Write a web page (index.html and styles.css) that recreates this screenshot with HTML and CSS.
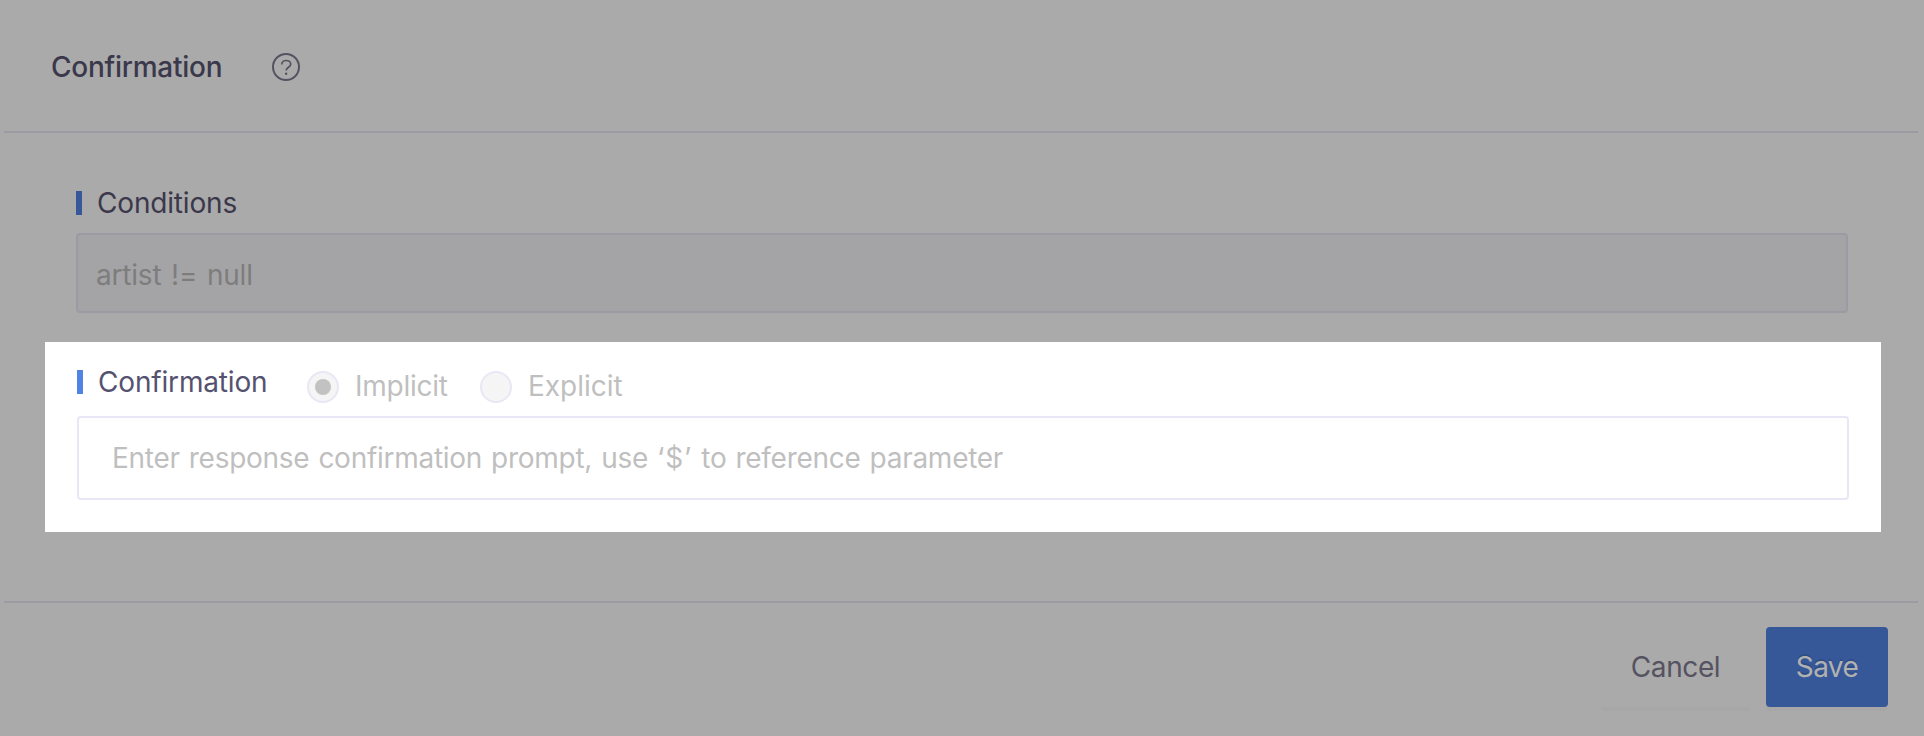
FILE: index.html
```html
<!DOCTYPE html>
<html lang="en">
<head>
<meta charset="utf-8">
<title>Confirmation</title>
<link rel="stylesheet" href="styles.css">
</head>
<body>
<main class="panel">
  <header class="header">
    <h1 class="title">Confirmation</h1>
    <svg class="help" viewBox="0 0 28 28" fill="none" stroke="currentColor">
      <circle cx="14" cy="14" r="13" stroke-width="2"/>
      <path d="M9.8 11.4C9.8 9 11.6 7.5 14.1 7.5S18.7 9 18.7 11.2c0 3-4.6 3.2-4.6 6.4" stroke-width="1.7"/>
      <circle cx="14.1" cy="20.8" r="1.2" fill="currentColor" stroke="none"/>
    </svg>
  </header>
  <section class="conditions">
    <h2 class="label">Conditions</h2>
    <div class="field field-disabled"><span class="value">artist != null</span></div>
  </section>
  <section class="spotlight">
    <div class="row">
      <h2 class="label">Confirmation</h2>
      <div class="option"><span class="radio radio-on"></span><span class="implicit">Implicit</span></div>
      <div class="option"><span class="radio"></span><span class="explicit">Explicit</span></div>
    </div>
    <div class="field field-prompt"><span class="prompt">Enter response confirmation prompt, use <span class="symbol">‘$’</span> to reference parameter</span></div>
  </section>
  <footer class="footer">
    <div class="button cancel"><span>Cancel</span></div>
    <div class="button save"><span>Save</span></div>
  </footer>
</main>
</body>
</html>
```
FILE: styles.css
```css
* { box-sizing: border-box; }
body { margin: 0; background: #aaa; font: 400 28px/36px Inter, "Liberation Sans", sans-serif; letter-spacing: -0.4px; }
h1, h2 { margin: 0; font: inherit; }
.panel { height: 736px; padding: 0 6px 0 4px; display: flex; flex-direction: column; overflow: hidden; }
.header { height: 133px; flex: none; display: flex; align-items: flex-start; border-bottom: 2px solid #9c9ba4; padding: 49px 0 0 47px; }
.title { width: 221px; font-weight: 550; letter-spacing: -0.25px; color: #3b384c; }
.help { width: 28px; height: 28px; margin-top: 4px; color: #555261; }
.conditions { height: 209px; flex: none; padding: 52px 70px 0 72px; }
.label { display: flex; align-items: center; gap: 15px; color: #3b384c; height: 36px; letter-spacing: -0.17px; }
.label::before { content: ""; width: 6px; height: 24px; background: #365899; }
.field { display: flex; align-items: center; border: 2px solid; border-radius: 4px; }
.field-disabled { height: 80px; margin-top: 12px; padding: 4px 0 0 18px; color: #7d7d7d; background: #a4a4a6; border-color: #9c9ba4; }
.value { letter-spacing: -0.2px; word-spacing: 2px; }
.spotlight { height: 190px; flex: none; margin: 0 37px 0 41px; padding: 22px 32px 0; background: #fff; }
.row { display: flex; height: 44px; align-items: flex-start; }
.spotlight .label { width: 230px; color: #555270; }
.spotlight .label::before { background: #5083e4; }
.option { display: flex; align-items: center; height: 32px; margin-top: 7px; width: 173px; gap: 16px; color: #bfbfbf; }
.implicit, .explicit { padding-bottom: 2px; }
.implicit { letter-spacing: -0.25px; }
.explicit { letter-spacing: 0; }
.radio { width: 32px; height: 32px; flex: none; border: 2px solid #e8e7f5; border-radius: 50%; background: #f5f5f5; display: flex; align-items: center; justify-content: center; }
.radio-on::after { content: ""; width: 16px; height: 16px; border-radius: 50%; background: #c2c2c2; }
.field-prompt { height: 84px; margin-top: 8px; padding-left: 33px; color: #bfbfbf; border-color: #e8e7f5; background: #fff; }
.prompt { letter-spacing: -0.27px; word-spacing: 1.4px; }
.symbol { letter-spacing: 0.9px; }
.footer { height: 135px; margin-top: 69px; flex: none; display: flex; justify-content: flex-end; gap: 16px; border-top: 2px solid #9c9ba4; padding: 24px 30px 0 0; }
.button { height: 80px; display: flex; align-items: center; justify-content: center; border-radius: 4px; box-shadow: 0 4px 0 rgba(0,0,0,.015); }
.cancel { width: 149px; color: #555261; background: #aaa; }
.save { width: 122px; color: #b1b1b2; background: #365899; text-shadow: 0 -2px 0 rgba(0,0,0,.12); letter-spacing: -0.6px; }
```
